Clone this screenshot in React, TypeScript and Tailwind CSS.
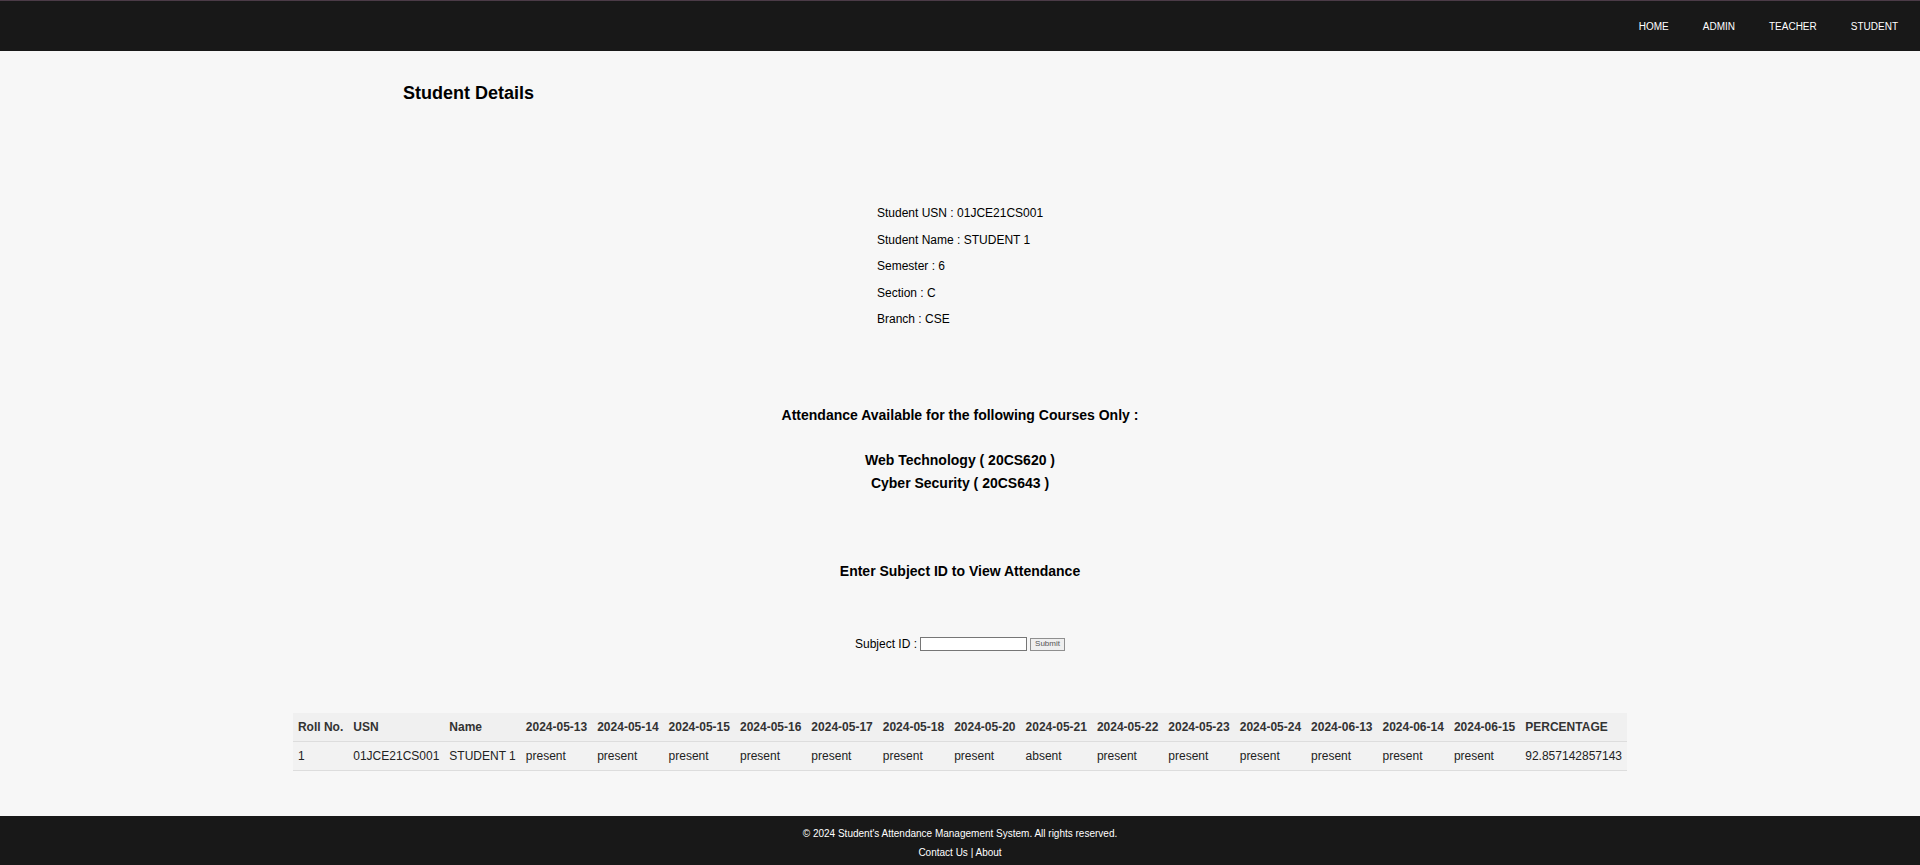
import React from 'react';

const dates = [
  '2024-05-13', '2024-05-14', '2024-05-15', '2024-05-16', '2024-05-17',
  '2024-05-18', '2024-05-20', '2024-05-21', '2024-05-22', '2024-05-23',
  '2024-05-24', '2024-06-13', '2024-06-14', '2024-06-15',
];

const statuses = [
  'present', 'present', 'present', 'present', 'present',
  'present', 'present', 'absent', 'present', 'present',
  'present', 'present', 'present', 'present',
];

const App: React.FC = () => {
  return (
    <div className="flex flex-col h-[865px] bg-[#f7f7f7] text-black font-['Liberation_Sans',Arial,sans-serif]">
      {/* Top nav */}
      <header className="h-[51px] shrink-0 border-t border-[#4b3b47] bg-[#181818] flex items-center justify-end pr-[5px] pt-[2px]">
        {['HOME', 'ADMIN', 'TEACHER', 'STUDENT'].map(item => (
          <a key={item} className="px-[17px] text-[10px] leading-[12px] text-white cursor-pointer">
            {item}
          </a>
        ))}
      </header>

      <main className="flex-1 flex flex-col">
        <h3 className="mt-[31px] pl-[403px] text-[18px] leading-[22px] font-bold">Student Details</h3>

        {/* Student info */}
        <div className="mt-[102px] pl-[877px] flex flex-col gap-[12.5px] text-[12px] leading-[14px]">
          <p>Student USN : 01JCE21CS001</p>
          <p>Student Name : STUDENT 1</p>
          <p>Semester : 6</p>
          <p>Section : C</p>
          <p>Branch : CSE</p>
        </div>

        <h4 className="mt-[81px] text-center text-[14px] leading-[16px] font-bold">
          Attendance Available for the following Courses Only :
        </h4>
        <div className="mt-[29px] flex flex-col gap-[6.5px] text-center text-[14px] leading-[16px] font-bold">
          <p>Web Technology ( 20CS620 )</p>
          <p>Cyber Security ( 20CS643 )</p>
        </div>

        <h4 className="mt-[72.5px] text-center text-[14px] leading-[16px] font-bold">
          Enter Subject ID to View Attendance
        </h4>

        {/* Subject form */}
        <form className="mt-[58px] h-[14px] flex items-center justify-center text-[12px] leading-[14px]">
          <label className="mr-[3px]">Subject ID :</label>
          <input type="text" className="w-[107px] h-[14px] bg-white border border-[#767676] outline-none" />
          <button type="button" className="ml-[3px] w-[35px] h-[13px] bg-[#efefef] border border-[#8f8f8f] text-[8px] leading-[10px] text-[#555]">
            Submit
          </button>
        </form>

        {/* Attendance table */}
        <table className="mt-[62px] mx-auto border-collapse text-[12px] leading-[14px] text-[#222]">
          <thead>
            <tr className="bg-[#f0f0f0] border-b border-[#dddddd] text-[#333]">
              <th className="px-[5px] py-[7px] text-left font-bold">Roll No.</th>
              <th className="px-[5px] py-[7px] text-left font-bold">USN</th>
              <th className="px-[5px] py-[7px] text-left font-bold">Name</th>
              {dates.map(d => (
                <th key={d} className="px-[5px] py-[7px] text-left font-bold">{d}</th>
              ))}
              <th className="px-[5px] py-[7px] text-left font-bold">PERCENTAGE</th>
            </tr>
          </thead>
          <tbody>
            <tr className="bg-[#f2f2f2] border-b border-[#dddddd]">
              <td className="px-[5px] py-[7px]">1</td>
              <td className="px-[5px] py-[7px]">01JCE21CS001</td>
              <td className="px-[5px] py-[7px]">STUDENT 1</td>
              {statuses.map((s, i) => (
                <td key={i} className="px-[5px] py-[7px]">{s}</td>
              ))}
              <td className="px-[5px] py-[7px]">92.857142857143</td>
            </tr>
          </tbody>
        </table>
      </main>

      <footer className="h-[49px] shrink-0 bg-[#181818] flex flex-col items-center pt-[11px] gap-[4.7px] text-[10px] leading-[14px] text-white">
        <p>© 2024 Student's Attendance Management System. All rights reserved.</p>
        <p>
          <a className="cursor-pointer">Contact Us</a> | <a className="cursor-pointer">About</a>
        </p>
      </footer>
    </div>
  );
};

export default App;
